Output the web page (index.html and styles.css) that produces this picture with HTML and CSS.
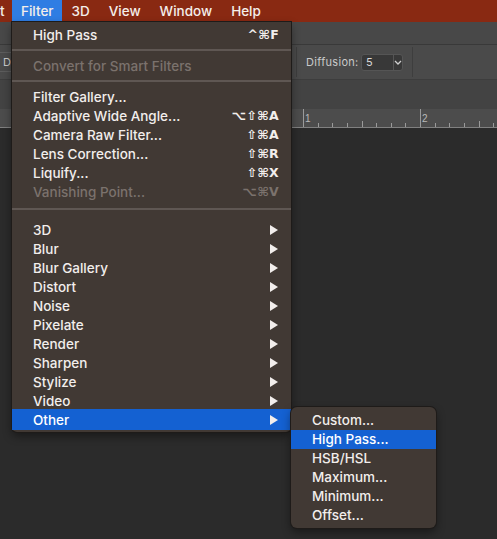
FILE: index.html
```html
<!DOCTYPE html>
<html>
<head>
<meta charset="utf-8">
<link rel="stylesheet" href="styles.css">
</head>
<body>
<div class="menubar">
  <span class="mb-item mb-cut">t</span>
  <span class="mb-item mb-active">Filter</span>
  <span class="mb-item">3D</span>
  <span class="mb-item">View</span>
  <span class="mb-item">Window</span>
  <span class="mb-item">Help</span>
</div>
<div class="appbar"></div>
<div class="options">
  <div class="opt-field"><span>De</span></div>
  <div class="opt-group">
    <span class="opt-label">Diffusion:</span>
    <div class="select">
      <span class="select-val">5</span>
      <span class="select-btn"><svg width="8" height="5" viewBox="0 0 8 5"><path d="M1 1 L4 4 L7 1" fill="none" stroke="#d0d0d0" stroke-width="1.3"/></svg></span>
    </div>
  </div>
</div>
<div class="tabs"></div>
<div class="ruler">
  <svg width="497" height="19" viewBox="0 0 497 19">
    <g stroke="#9a9a9a" stroke-width="1">
      <line x1="303.5" y1="0" x2="303.5" y2="18"/>
      <line x1="420.5" y1="0" x2="420.5" y2="18"/>
      <line x1="318.5" y1="14" x2="318.5" y2="18"/>
      <line x1="332.5" y1="14" x2="332.5" y2="18"/>
      <line x1="347.5" y1="14" x2="347.5" y2="18"/>
      <line x1="362.5" y1="12" x2="362.5" y2="18"/>
      <line x1="376.5" y1="14" x2="376.5" y2="18"/>
      <line x1="391.5" y1="14" x2="391.5" y2="18"/>
      <line x1="405.5" y1="14" x2="405.5" y2="18"/>
      <line x1="435.5" y1="14" x2="435.5" y2="18"/>
      <line x1="449.5" y1="14" x2="449.5" y2="18"/>
      <line x1="464.5" y1="14" x2="464.5" y2="18"/>
      <line x1="479.5" y1="12" x2="479.5" y2="18"/>
      <line x1="493.5" y1="14" x2="493.5" y2="18"/>
    </g>
    <text x="305" y="13" class="ruler-num">1</text>
    <text x="422" y="13" class="ruler-num">2</text>
  </svg>
</div>
<div class="canvas"></div>

<div class="menu">
  <div class="row"><span>High Pass</span><span class="sc">^⌘F</span></div>
  <div class="sep"></div>
  <div class="row dis"><span>Convert for Smart Filters</span></div>
  <div class="sep"></div>
  <div class="row"><span>Filter Gallery...</span></div>
  <div class="row"><span>Adaptive Wide Angle...</span><span class="sc">⌥⇧⌘A</span></div>
  <div class="row"><span>Camera Raw Filter...</span><span class="sc">⇧⌘A</span></div>
  <div class="row"><span>Lens Correction...</span><span class="sc">⇧⌘R</span></div>
  <div class="row"><span>Liquify...</span><span class="sc">⇧⌘X</span></div>
  <div class="row dis"><span>Vanishing Point...</span><span class="sc">⌥⌘V</span></div>
  <div class="sep sep-tall"></div>
  <div class="row"><span>3D</span><span class="arrow"></span></div>
  <div class="row"><span>Blur</span><span class="arrow"></span></div>
  <div class="row"><span>Blur Gallery</span><span class="arrow"></span></div>
  <div class="row"><span>Distort</span><span class="arrow"></span></div>
  <div class="row"><span>Noise</span><span class="arrow"></span></div>
  <div class="row"><span>Pixelate</span><span class="arrow"></span></div>
  <div class="row"><span>Render</span><span class="arrow"></span></div>
  <div class="row"><span>Sharpen</span><span class="arrow"></span></div>
  <div class="row"><span>Stylize</span><span class="arrow"></span></div>
  <div class="row"><span>Video</span><span class="arrow"></span></div>
  <div class="row sel"><span>Other</span><span class="arrow"></span></div>
</div>

<div class="submenu">
  <div class="row"><span>Custom...</span></div>
  <div class="row sel"><span>High Pass...</span></div>
  <div class="row"><span>HSB/HSL</span></div>
  <div class="row"><span>Maximum...</span></div>
  <div class="row"><span>Minimum...</span></div>
  <div class="row"><span>Offset...</span></div>
</div>
</body>
</html>
```
FILE: styles.css
```css
html, body {
  margin: 0;
  padding: 0;
}
body {
  width: 497px;
  height: 539px;
  overflow: hidden;
  background: #2a2a2a;
  font-family: Inter, "Liberation Sans", "DejaVu Sans", sans-serif;
  position: relative;
}
.menubar {
  height: 22px;
  background: #892912;
  display: flex;
  align-items: center;
  color: #f4eeea;
  font-size: 13.5px;
  font-weight: 500;
}
.mb-item {
  height: 22px;
  line-height: 22px;
  padding: 0 9.5px;
}
.mb-cut {
  padding: 0;
  width: 12px;
}
.mb-active {
  background: #2f7de3;
  padding: 0 9px;
  width: 32px;
}
.appbar {
  height: 22px;
  background: #484848;
  border-bottom: 1px solid #393939;
}
.options {
  height: 34px;
  background: #4a4a4a;
  border-bottom: 1px solid #3d3d3d;
  display: flex;
  align-items: center;
  font-size: 11px;
  color: #c9c9c9;
}
.opt-field {
  width: 12px;
  height: 20px;
  border: 1px solid #5c5c5c;
  border-left: none;
  border-right: none;
  display: flex;
  align-items: center;
  padding-left: 3px;
  box-sizing: border-box;
  overflow: hidden;
  white-space: nowrap;
}
.opt-group {
  margin-left: 284px;
  height: 30px;
  width: 117px;
  border-left: 1px solid #3e3e3e;
  border-right: 1px solid #3e3e3e;
  display: flex;
  align-items: center;
  padding-left: 9px;
  box-sizing: border-box;
}
.opt-label {
  letter-spacing: 0.3px;
  width: 55px;
}
.select {
  width: 42px;
  height: 17px;
  background: #383838;
  border: 1px solid #555;
  border-radius: 3px;
  display: flex;
  box-sizing: border-box;
}
.select-val {
  width: 28px;
  padding-left: 4px;
  line-height: 15px;
  color: #d8d8d8;
  border-right: 1px solid #555;
}
.select-btn {
  flex: 1;
  display: flex;
  align-items: center;
  justify-content: center;
}
.tabs {
  height: 29px;
  background: #434343;
}
.ruler {
  height: 18px;
  background: #4c4c4c;
  border-bottom: 1px solid #808080;
}
.ruler svg {
  display: block;
}
.ruler-num {
  font-size: 10px;
  fill: #b8b8b8;
  font-family: "Liberation Sans", sans-serif;
}
.canvas {
  height: 412px;
  background: #2b2b2b;
}

.menu, .submenu {
  position: absolute;
  background: #413934;
  color: #f2eeec;
  font-size: 13.5px;
  font-weight: 500;
  box-shadow: 0 0 0 1px #1e1b19, 0 4px 10px rgba(0,0,0,0.45);
  box-sizing: border-box;
}
.menu {
  left: 12px;
  top: 22px;
  width: 279px;
  padding: 3px 0 2px;
  border-radius: 0 0 5px 5px;
}
.submenu {
  left: 291px;
  top: 407px;
  width: 145px;
  padding: 3.5px 0;
  border-radius: 6px;
}
.row {
  height: 19px;
  display: flex;
  align-items: center;
  justify-content: space-between;
  padding: 0 12px 0 21px;
}
.row.dis {
  color: #7b726d;
}
.row.sel {
  background: #1461d2;
  color: #ffffff;
}
.menu .row.sel {
  height: 21px;
  margin-top: -1px;
  padding-top: 1px;
  box-sizing: border-box;
}
.sc {
  font-family: "DejaVu Sans", sans-serif;
  font-size: 12.5px;
  font-weight: bold;
  letter-spacing: 0.3px;
}
.arrow {
  width: 0;
  height: 0;
  margin-right: 1px;
  border-left: 8px solid #f2eeec;
  border-top: 5px solid transparent;
  border-bottom: 5px solid transparent;
}
.sep {
  height: 12px;
  display: flex;
  align-items: center;
}
.sep::before {
  content: "";
  display: block;
  width: 100%;
  height: 2px;
  background: #5f5753;
}
.sep-tall {
  height: 19px;
  align-items: flex-start;
  padding-top: 7px;
  box-sizing: border-box;
}
```
